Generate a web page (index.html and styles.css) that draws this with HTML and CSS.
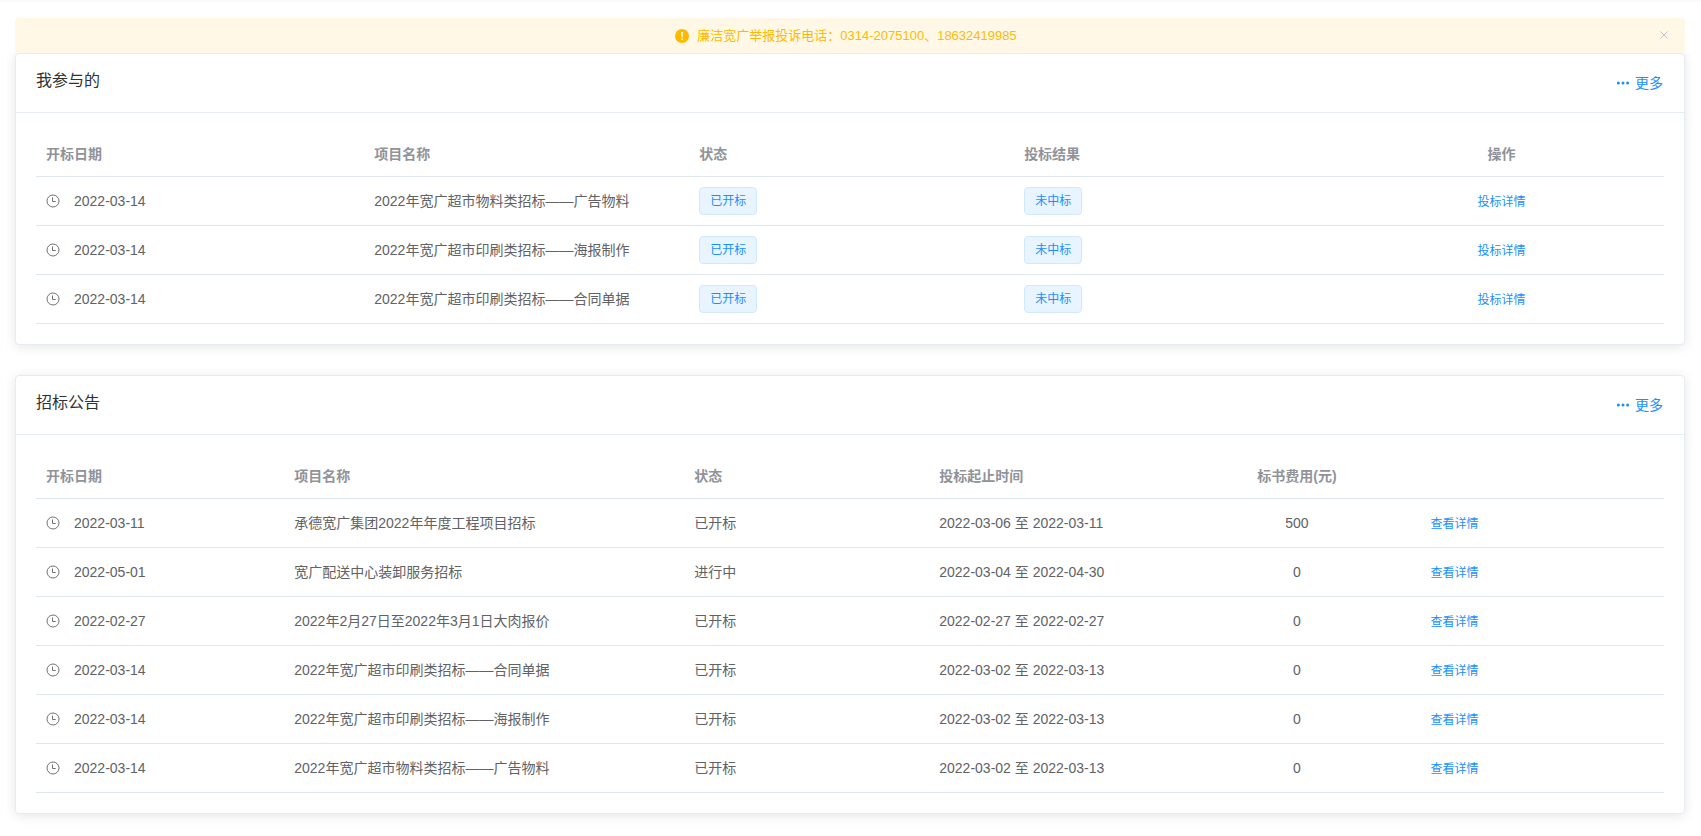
FILE: index.html
```html
<!DOCTYPE html>
<html lang="zh-CN">
<head>
<meta charset="utf-8">
<title>招标公告</title>
<link rel="stylesheet" href="styles.css">
</head>
<body>
<svg class="sprite" aria-hidden="true">
  <symbol id="clock" viewBox="0 0 14 14"><circle cx="7" cy="7" r="6" fill="none" stroke="currentColor" stroke-width="0.9"/><path d="M6.5 3.5V7.5H9.7" fill="none" stroke="currentColor" stroke-width="0.9"/></symbol>
  <symbol id="more" viewBox="0 0 14 14"><circle cx="2.4" cy="7" r="1.5"/><circle cx="7" cy="7" r="1.5"/><circle cx="11.6" cy="7" r="1.5"/></symbol>
</svg>
<main class="page">
  <div class="alert" role="alert">
    <svg class="alert-icon" viewBox="0 0 14 14" aria-hidden="true"><circle cx="7" cy="7" r="7" fill="#ffba00"/><path d="M6 3h2l-.3 5.2H6.3z" fill="#fff8e6"/><circle cx="7" cy="10.2" r="0.9" fill="#fff8e6"/></svg>
    <span>廉洁宽广举报投诉电话：0314-2075100、18632419985</span>
    <button class="alert-close" type="button" aria-label="关闭"><svg viewBox="0 0 10 10"><path d="M1.5 1.5l7 7M8.5 1.5l-7 7" stroke="currentColor" stroke-width="1"/></svg></button>
  </div>

  <section class="card">
    <header class="card-header"><h2>我参与的</h2><a class="more" href="#"><svg class="icon" aria-hidden="true"><use href="#more"/></svg>更多</a></header>
    <div class="card-body">
      <table class="joined">
        <thead><tr><th>开标日期</th><th>项目名称</th><th>状态</th><th>投标结果</th><th class="center">操作</th></tr></thead>
        <tbody>
          <tr><td><span class="date"><svg class="icon"><use href="#clock"/></svg>2022-03-14</span></td><td>2022年宽广超市物料类招标——广告物料</td><td><span class="tag">已开标</span></td><td><span class="tag">未中标</span></td><td class="center"><a href="#">投标详情</a></td></tr>
          <tr><td><span class="date"><svg class="icon"><use href="#clock"/></svg>2022-03-14</span></td><td>2022年宽广超市印刷类招标——海报制作</td><td><span class="tag">已开标</span></td><td><span class="tag">未中标</span></td><td class="center"><a href="#">投标详情</a></td></tr>
          <tr><td><span class="date"><svg class="icon"><use href="#clock"/></svg>2022-03-14</span></td><td>2022年宽广超市印刷类招标——合同单据</td><td><span class="tag">已开标</span></td><td><span class="tag">未中标</span></td><td class="center"><a href="#">投标详情</a></td></tr>
        </tbody>
      </table>
    </div>
  </section>

  <section class="card">
    <header class="card-header"><h2>招标公告</h2><a class="more" href="#"><svg class="icon" aria-hidden="true"><use href="#more"/></svg>更多</a></header>
    <div class="card-body">
      <table class="notices">
        <thead><tr><th>开标日期</th><th>项目名称</th><th>状态</th><th>投标起止时间</th><th class="center">标书费用(元)</th><th></th></tr></thead>
        <tbody>
          <tr><td><span class="date"><svg class="icon"><use href="#clock"/></svg>2022-03-11</span></td><td>承德宽广集团2022年年度工程项目招标</td><td>已开标</td><td>2022-03-06 至 2022-03-11</td><td class="center">500</td><td><a href="#">查看详情</a></td></tr>
          <tr><td><span class="date"><svg class="icon"><use href="#clock"/></svg>2022-05-01</span></td><td>宽广配送中心装卸服务招标</td><td>进行中</td><td>2022-03-04 至 2022-04-30</td><td class="center">0</td><td><a href="#">查看详情</a></td></tr>
          <tr><td><span class="date"><svg class="icon"><use href="#clock"/></svg>2022-02-27</span></td><td>2022年2月27日至2022年3月1日大肉报价</td><td>已开标</td><td>2022-02-27 至 2022-02-27</td><td class="center">0</td><td><a href="#">查看详情</a></td></tr>
          <tr><td><span class="date"><svg class="icon"><use href="#clock"/></svg>2022-03-14</span></td><td>2022年宽广超市印刷类招标——合同单据</td><td>已开标</td><td>2022-03-02 至 2022-03-13</td><td class="center">0</td><td><a href="#">查看详情</a></td></tr>
          <tr><td><span class="date"><svg class="icon"><use href="#clock"/></svg>2022-03-14</span></td><td>2022年宽广超市印刷类招标——海报制作</td><td>已开标</td><td>2022-03-02 至 2022-03-13</td><td class="center">0</td><td><a href="#">查看详情</a></td></tr>
          <tr><td><span class="date"><svg class="icon"><use href="#clock"/></svg>2022-03-14</span></td><td>2022年宽广超市物料类招标——广告物料</td><td>已开标</td><td>2022-03-02 至 2022-03-13</td><td class="center">0</td><td><a href="#">查看详情</a></td></tr>
        </tbody>
      </table>
    </div>
  </section>
</main>
</body>
</html>
```

FILE: styles.css
```css
* { box-sizing: border-box; }

body {
  margin: 0;
  background: #fff;
  color: #606266;
  font: 14px/24px "Liberation Sans", "Noto Sans CJK SC", sans-serif;
}

.sprite { display: none; }

.page {
  padding: 18px 16px 22px 15px;
  box-shadow: inset 0 2px 3px -1px rgba(0, 0, 0, 0.04);
}

a { color: #1890ff; text-decoration: none; }

.icon { width: 14px; height: 14px; fill: currentColor; }

.alert {
  position: relative;
  display: flex;
  align-items: center;
  justify-content: center;
  gap: 8px;
  min-height: 35px;
  padding: 0 16px 0 8px;
  border-radius: 4px;
  background: #fff8e6;
  color: #ffba00;
  font-size: 13px;
  line-height: 18px;
}

.alert-icon { width: 14px; height: 14px; }

.alert-close {
  position: absolute;
  top: 12px;
  right: 16px;
  display: flex;
  padding: 0;
  border: 0;
  background: none;
  color: #c0c4cc;
  cursor: pointer;
}

.alert-close svg { width: 10px; height: 10px; }

.card {
  border: 1px solid #e6ebf5;
  border-radius: 4px;
  background: #fff;
  box-shadow: 0 2px 12px 0 rgba(0, 0, 0, 0.1);
}

.card + .card { margin-top: 30px; }

.card-header {
  display: flex;
  justify-content: space-between;
  align-items: flex-start;
  padding: 15px 20px 17px;
  border-bottom: 1px solid #e6ebf5;
}

.card-header h2 {
  margin: 0;
  color: #303133;
  font-size: 16px;
  font-weight: 400;
  line-height: 24px;
}

.more {
  display: flex;
  align-items: center;
  gap: 5px;
  padding: 2px 1px 0 0;
}

.card-body { padding: 20px; }

table {
  width: 100%;
  table-layout: fixed;
  border-collapse: separate;
  border-spacing: 0;
}

th, td {
  height: 49px;
  padding: 0 10px;
  border-bottom: 1px solid #dfe6ec;
  text-align: left;
  vertical-align: middle;
}

th {
  height: 44px;
  padding-bottom: 2px;
  color: #909399;
  font-weight: 700;
}

.center { text-align: center; }

td a {
  display: block;
  padding-top: 2px;
  font-size: 12px;
}

.joined th { width: 19.96%; }
.joined th:first-child { width: auto; }

.notices th { width: 15%; }
.notices th:first-child { width: 15.25%; }
.notices th:nth-child(2) { width: 24.57%; }
.notices th:nth-child(3) { width: 15.05%; }
.notices th:nth-child(5) { width: 15.17%; }
.notices th:last-child { width: auto; }

.date {
  display: flex;
  align-items: center;
  gap: 14px;
}

.tag {
  display: block;
  width: fit-content;
  height: 28px;
  padding: 0 10px;
  border: 1px solid #d1e9ff;
  border-radius: 4px;
  background: #e8f4ff;
  color: #1890ff;
  font-size: 12px;
  line-height: 26px;
}
```
